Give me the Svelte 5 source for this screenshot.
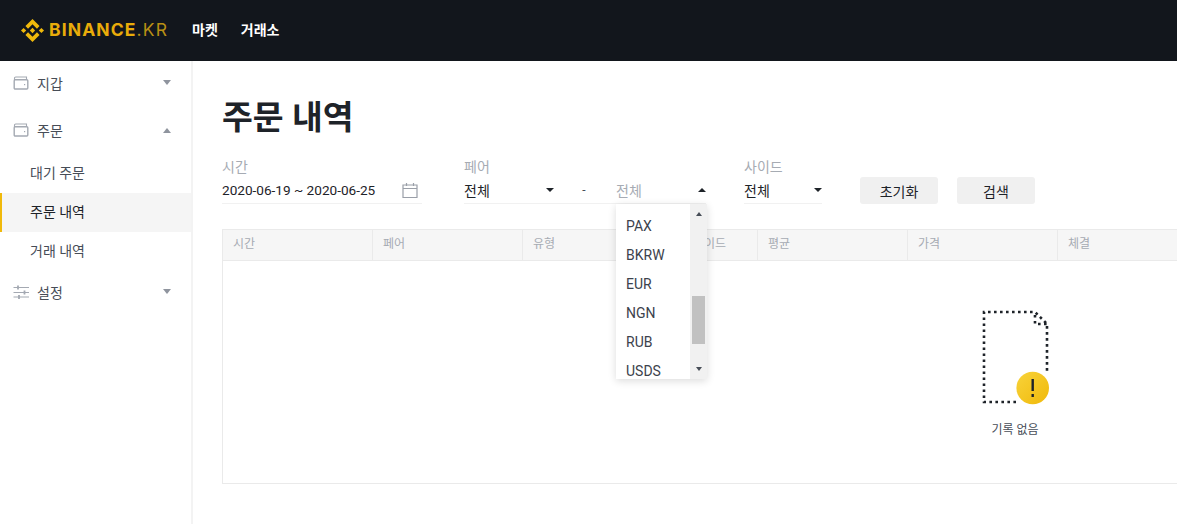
<script lang="ts">
  const columns = [
    { label: '시간', width: 150 },
    { label: '페어', width: 150 },
    { label: '유형', width: 160 },
    { label: '사이드', width: 75 },
    { label: '평균', width: 150 },
    { label: '가격', width: 150 },
    { label: '체결', width: 150 },
    { label: '', width: 601 }
  ]
  const coins = ['PAX', 'BKRW', 'EUR', 'NGN', 'RUB', 'USDS']
  const subItems = [
    { label: '대기 주문', active: false },
    { label: '주문 내역', active: true },
    { label: '거래 내역', active: false }
  ]
</script>

{#snippet wallet()}
  <svg class="nav-icon" viewBox="0 0 16 14" width="16" height="14">
    <path d="M1.500 4V2.200C1.500 1.500 2 1 2.700 1H13.500v3" fill="none" stroke="#a4a9b2" stroke-width="1.100" />
    <rect x="1.200" y="3.700" width="13.600" height="9.300" rx="1" fill="none" stroke="#a4a9b2" stroke-width="1.400" />
    <rect x="11" y="8" width="1.200" height="1.200" fill="#a4a9b2" />
  </svg>
{/snippet}

<div class="page">
  <header class="top">
    <div class="logo">
      <svg viewBox="0 0 126.61 126.61" width="23" height="23">
        <g fill="#f0b90b">
          <polygon points="38.73 53.2 63.3 28.63 87.89 53.22 102.19 38.92 63.3 0 24.42 38.91 38.73 53.2" />
          <polygon points="0 63.31 14.3 49.01 28.6 63.31 14.3 77.61" />
          <polygon points="38.73 73.41 63.3 97.98 87.89 73.39 102.2 87.69 63.3 126.61 24.42 87.71" />
          <polygon points="98.01 63.31 112.31 49.01 126.61 63.31 112.31 77.61" />
          <polygon points="77.81 63.3 63.3 48.78 48.8 63.28 63.3 77.83" />
        </g>
      </svg>
      <span class="brand">BINANCE</span><span class="brand-kr">.KR</span>
    </div>
    <nav class="top-nav">
      <span>마켓</span>
      <span>거래소</span>
    </nav>
  </header>

  <div class="body">
    <aside class="side">
      <div class="side-row first">
        {@render wallet()}
        <span>지갑</span>
        <i class="caret down"></i>
      </div>
      <div class="side-row second">
        {@render wallet()}
        <span>주문</span>
        <i class="caret up"></i>
      </div>
      {#each subItems as item}
        <div class="sub" class:active={item.active}>{item.label}</div>
      {/each}
      <div class="side-row third">
        <svg class="nav-icon" viewBox="0 0 16 14" width="16" height="14">
          <g stroke="#a4a9b2" stroke-width="1.200" fill="none">
            <path d="M0.500 2.500H16M0.500 7.500H16M0.500 12H16" />
            <path d="M5 0.500v4M11.500 5.500v4M6 10v4" stroke-width="1.800" />
          </g>
        </svg>
        <span>설정</span>
        <i class="caret down"></i>
      </div>
    </aside>

    <main class="main">
      <h1>주문 내역</h1>

      <div class="filters">
        <div class="field date">
          <div class="lbl">시간</div>
          <div class="val">
            <span>2020-06-19 ~ 2020-06-25</span>
            <svg viewBox="0 0 16 16" width="16" height="16">
              <path d="M1 3h14v12.500H1zM1 6.500h14M4.500 1v3M11.500 1v3" fill="none" stroke="#9a9fa8" stroke-width="1.200" />
            </svg>
          </div>
        </div>

        <div class="field pair">
          <div class="lbl">페어</div>
          <div class="val pair-val">
            <div class="sel first-sel"><span>전체</span><i class="mini down"></i></div>
            <span class="dash">-</span>
            <div class="sel second-sel">
              <span class="muted">전체</span><i class="mini up"></i>
              <div class="dropdown">
                <ul>
                  {#each coins as coin}
                    <li>{coin}</li>
                  {/each}
                </ul>
                <div class="bar">
                  <i class="mini up small"></i>
                  <div class="thumb"></div>
                  <i class="mini down small"></i>
                </div>
              </div>
            </div>
          </div>
        </div>

        <div class="field side-field">
          <div class="lbl">사이드</div>
          <div class="val">
            <span>전체</span><i class="mini down"></i>
          </div>
        </div>

        <button class="btn reset">초기화</button>
        <button class="btn">검색</button>
      </div>

      <section class="table">
        <div class="thead">
          {#each columns as col}
            <div class="th" style="width: {col.width}px">{col.label}</div>
          {/each}
        </div>
        <div class="empty">
          <svg viewBox="0 0 70 96" width="70" height="96">
            <defs>
              <linearGradient id="coin" x1="0" y1="0" x2="1" y2="1">
                <stop offset="0" stop-color="#f8d33a" />
                <stop offset="1" stop-color="#f0b90b" />
              </linearGradient>
            </defs>
            <path d="M36 93H4V3H55L67 15V63" fill="none" stroke="#1e2329" stroke-width="2.600" stroke-dasharray="2.600 3.400" />
            <path d="M55 6V15H67" fill="none" stroke="#1e2329" stroke-width="2.600" stroke-dasharray="2.600 3.400" />
            <circle cx="52.700" cy="79" r="16.300" fill="url(#coin)" />
            <rect x="51.500" y="70" width="2.400" height="12" fill="#1e2329" />
            <rect x="51.500" y="85" width="2.400" height="3" fill="#1e2329" />
          </svg>
          <p>기록 없음</p>
        </div>
      </section>
    </main>
  </div>
</div>

<style>
  :global(body) {
    margin: 0;
    background: #fff;
  }

  .page {
    width: 1177px;
    height: 524px;
    overflow: hidden;
    font-family: Roboto, 'Noto Sans CJK KR', sans-serif;
    color: #1e2329;
  }

  .top {
    height: 60px;
    padding: 0 0 1px 21px;
    background: #12161c;
    display: flex;
    align-items: center;
  }

  .logo {
    display: flex;
    align-items: center;
    width: 171px;
  }

  .brand {
    margin: 0 0 1px 5px;
    font: 700 17.500px/1 Inter, sans-serif;
    color: #e9ac0a;
    letter-spacing: 1.100px;
  }

  .brand-kr {
    margin-bottom: 1px;
    font: 400 17.500px/1 Inter, sans-serif;
    color: #b98f14;
    letter-spacing: 1.200px;
  }

  .top-nav {
    display: flex;
    gap: 23px;
    margin-bottom: 2px;
    color: #fff;
    font-size: 14px;
    font-weight: 700;
  }

  .body {
    display: flex;
    height: 463px;
  }

  .side {
    width: 191px;
    flex: none;
    border-right: 2px solid #f3f3f3;
    font-size: 14px;
    color: #474d57;
  }

  .side-row {
    display: flex;
    align-items: center;
    padding: 0 20px 0 13px;
  }

  .first {
    height: 43px;
    padding-bottom: 4px;
  }

  .second {
    height: 44px;
    padding-bottom: 2px;
  }

  .third {
    height: 41px;
    padding-bottom: 4px;
  }

  .nav-icon {
    margin-right: 8px;
    flex: none;
  }

  .caret {
    margin-left: auto;
    border-left: 4.500px solid transparent;
    border-right: 4.500px solid transparent;
  }

  .caret.down {
    border-top: 5px solid #8f949e;
  }

  .caret.up {
    border-bottom: 5px solid #8f949e;
  }

  .sub {
    height: 39px;
    line-height: 38px;
    padding-left: 30px;
    box-sizing: border-box;
  }

  .sub.active {
    background: #f5f5f5;
    border-left: 2px solid #f0b90b;
    padding-left: 28px;
    color: #1e2329;
  }

  .main {
    flex: 1;
    min-width: 0;
    padding-left: 29px;
    overflow: hidden;
  }

  h1 {
    margin: 0;
    padding-top: 34px;
    font-size: 33.500px;
    line-height: 46px;
    font-weight: 700;
    color: #1e2329;
  }

  .filters {
    display: flex;
    align-items: flex-start;
    margin-top: 16px;
  }

  .field {
    flex: none;
  }

  .lbl {
    font-size: 14px;
    line-height: 20px;
    color: #a6abb3;
  }

  .val {
    display: flex;
    align-items: center;
    justify-content: space-between;
    height: 26px;
    font-size: 14px;
    border-bottom: 1px solid #f1f1f1;
    color: #1e2329;
    box-sizing: content-box;
  }

  .date {
    width: 200px;
    margin-right: 42px;
  }

  .date .val {
    font-size: 13.600px;
    padding-right: 4px;
  }

  .pair {
    width: 242px;
    margin-right: 38px;
  }

  .pair-val {
    justify-content: flex-start;
  }

  .sel {
    display: flex;
    align-items: center;
    justify-content: space-between;
    height: 100%;
  }

  .first-sel {
    width: 90px;
  }

  .dash {
    width: 62px;
    text-align: center;
    color: #474d57;
    font-size: 12px;
    padding-right: 2px;
    box-sizing: border-box;
  }

  .second-sel {
    position: relative;
    width: 90px;
  }

  .muted {
    color: #a6abb3;
  }

  .mini {
    display: block;
    border-left: 4px solid transparent;
    border-right: 4px solid transparent;
  }

  .mini.down {
    border-top: 4px solid #1e2329;
  }

  .mini.up {
    border-bottom: 4px solid #1e2329;
  }

  .mini.small.up {
    border-left-width: 3.500px;
    border-right-width: 3.500px;
    border-bottom-color: #474d57;
  }

  .mini.small.down {
    border-left-width: 3.500px;
    border-right-width: 3.500px;
    border-top-color: #474d57;
  }

  .dropdown {
    position: absolute;
    top: 27px;
    left: 0;
    width: 91px;
    height: 175px;
    display: flex;
    background: #fff;
    box-shadow: 0 2px 8px rgba(0, 0, 0, 0.14);
    overflow: hidden;
    z-index: 2;
  }

  ul {
    flex: 1;
    margin: 0;
    padding: 8px 0 0 10px;
    list-style: none;
    font-size: 14px;
    color: #3c424c;
  }

  li {
    height: 29px;
    line-height: 29px;
  }

  .bar {
    width: 17px;
    flex: none;
    background: #f1f1f1;
    display: flex;
    flex-direction: column;
    align-items: center;
    padding-top: 8px;
    box-sizing: border-box;
  }

  .thumb {
    width: 13px;
    height: 48px;
    margin: 80px 0 23px;
    background: #c1c1c1;
  }

  .btn {
    flex: none;
    width: 78px;
    height: 27px;
    margin-top: 20px;
    margin-right: 19px;
    padding: 0;
    border: 0;
    border-radius: 3px;
    background: #f0f0f0;
    color: #1e2329;
    font: 14px Roboto, 'Noto Sans CJK KR', sans-serif;
  }

  .side-field {
    width: 78px;
    margin-right: 38px;
  }

  .table {
    width: 1586px;
    height: 255px;
    margin-top: 25px;
    border: 1px solid #eaeaea;
    box-sizing: border-box;
  }

  .thead {
    display: flex;
    height: 30px;
    background: #f6f6f6;
    border-bottom: 1px solid #eaeaea;
  }

  .th {
    flex: none;
    box-sizing: border-box;
    padding-left: 10px;
    line-height: 29px;
    font-size: 12px;
    color: #a6abb3;
    border-right: 1px solid #eaeaea;
  }

  .empty {
    display: flex;
    flex-direction: column;
    align-items: center;
    padding-top: 48px;
  }

  .empty svg {
    display: block;
  }

  .empty p {
    margin: 16px 0 0;
    font-size: 12px;
    line-height: 18px;
    color: #474d57;
  }
</style>
